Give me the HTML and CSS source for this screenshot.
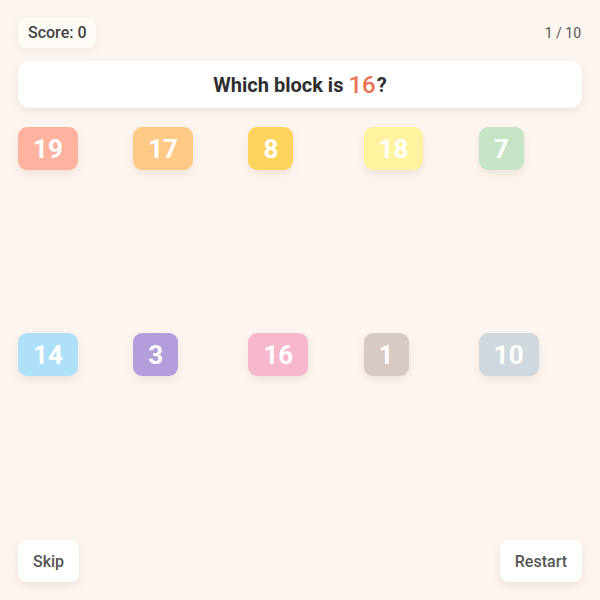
FILE: index.html
```
<!DOCTYPE html>
<html>
<head>
<meta charset="utf-8">
<link rel="stylesheet" href="styles.css">
</head>
<body>
<div class="app">
  <div class="top">
    <div class="score">Score: 0</div>
    <div class="progress">1 / 10</div>
  </div>
  <div class="question">Which block is <span class="target">16</span>?</div>
  <div class="grid">
    <div class="cell"><div class="block c-salmon">19</div></div>
    <div class="cell"><div class="block c-orange">17</div></div>
    <div class="cell"><div class="block c-amber">8</div></div>
    <div class="cell"><div class="block c-lemon">18</div></div>
    <div class="cell"><div class="block c-green">7</div></div>
    <div class="cell"><div class="block c-sky">14</div></div>
    <div class="cell"><div class="block c-purple">3</div></div>
    <div class="cell"><div class="block c-pink">16</div></div>
    <div class="cell"><div class="block c-taupe">1</div></div>
    <div class="cell"><div class="block c-slate">10</div></div>
  </div>
  <div class="bottom">
    <button class="btn">Skip</button>
    <button class="btn">Restart</button>
  </div>
</div>
</body>
</html>
```
FILE: styles.css
```
html, body {
  margin: 0;
  padding: 0;
  background: #fdf6f0;
  font-family: Roboto, "Noto Sans", sans-serif;
}
.app {
  box-sizing: border-box;
  width: 600px;
  height: 600px;
  padding: 18px;
  display: flex;
  flex-direction: column;
  gap: 13px;
}
.top {
  display: flex;
  justify-content: space-between;
  align-items: center;
  height: 30px;
}
.score {
  height: 30px;
  line-height: 30px;
  padding: 0 10px;
  border-radius: 8px;
  background: #fffbf6;
  box-shadow: 0 2px 8px rgba(120, 90, 60, 0.10);
  font-size: 16px;
  font-weight: 500;
  color: #444;
}
.progress {
  font-size: 14px;
  color: #555;
  padding-right: 1px;
}
.question {
  height: 47px;
  background: #fff;
  border-radius: 12px;
  box-shadow: 0 3px 10px rgba(120, 90, 60, 0.12);
  display: flex;
  align-items: center;
  justify-content: center;
  font-size: 20px;
  font-weight: 700;
  color: #2e2e2e;
}
.target {
  color: #ea7456;
  font-size: 24px;
  font-weight: 500;
  margin: 0 1px 0 5px;
}
.grid {
  flex: 1;
  display: grid;
  grid-template-columns: repeat(5, 1fr);
  grid-template-rows: repeat(2, 1fr);
  gap: 12px;
  margin-top: 6px;
}
.cell {
  display: flex;
  align-items: flex-start;
}
.block {
  height: 43px;
  min-width: 44px;
  box-sizing: border-box;
  padding: 0 15px;
  border-radius: 9px;
  display: flex;
  align-items: center;
  justify-content: center;
  color: #fff;
  font-size: 26px;
  font-weight: 700;
  box-shadow: 0 4px 10px rgba(120, 90, 60, 0.12);
}
.c-salmon { background: #ffb39e; }
.c-orange { background: #ffca85; }
.c-amber { background: #ffd45c; }
.c-lemon { background: #fff3a0; }
.c-green { background: #c6e4c6; }
.c-sky { background: #ade1fa; }
.c-purple { background: #b39ddb; }
.c-pink { background: #f7b7cd; }
.c-taupe { background: #d8c9c5; }
.c-slate { background: #cfd8dc; }
.bottom {
  display: flex;
  justify-content: space-between;
  align-items: center;
}
.btn {
  height: 42px;
  padding: 0 15px;
  border: none;
  border-radius: 8px;
  background: #fff;
  box-shadow: 0 3px 10px rgba(120, 90, 60, 0.14);
  font-family: Roboto, "Noto Sans", sans-serif;
  font-size: 16px;
  font-weight: 500;
  color: #555;
}
```
